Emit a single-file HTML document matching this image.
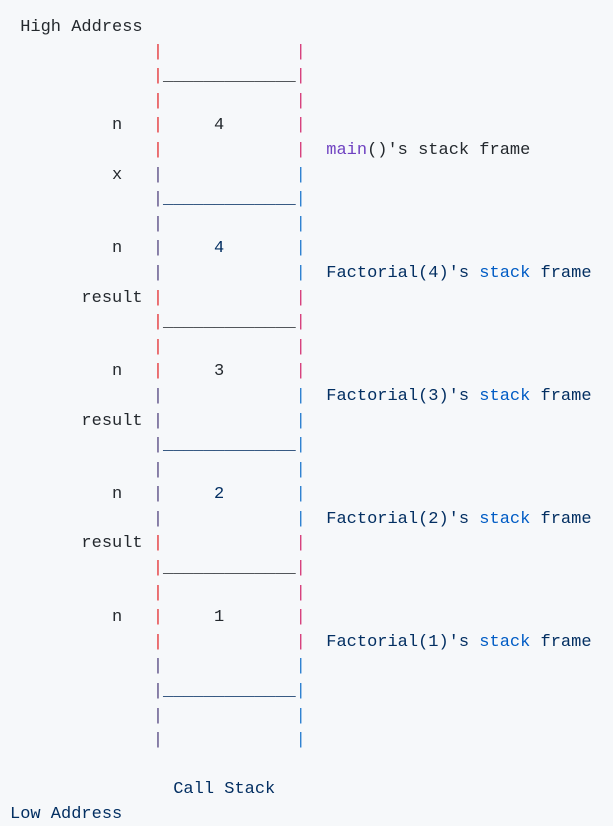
<!DOCTYPE html>
<html><head><meta charset="utf-8"><style>
html,body{margin:0;padding:0;background:#f6f8fa;width:613px;height:826px;overflow:hidden}
pre{margin:0;padding:16px 0 0 10px;font-family:"Liberation Mono",monospace;font-size:17px;line-height:24.6px;color:#24292e}
.r{color:#e5383b}.p{color:#d63c7a}.v{color:#5b4e86}.b{color:#2a7fd0}.n{color:#032f62}.m{color:#6f42c1}.s{color:#005cc5}
</style></head><body><pre> High Address
              <span class="r">|</span>             <span class="p">|</span>
              <span class="r">|</span>_____________<span class="p">|</span>
              <span class="r">|</span>             <span class="p">|</span>
          n   <span class="r">|</span>     4       <span class="p">|</span>
              <span class="r">|</span>             <span class="p">|</span>  <span class="m">main</span>()'s stack frame
          x   <span class="v">|</span>             <span class="b">|</span>
              <span class="v">|</span><span class="n">_____________</span><span class="b">|</span>
              <span class="v">|</span>             <span class="b">|</span>
          n   <span class="v">|</span>     <span class="n">4</span>       <span class="b">|</span>
              <span class="v">|</span>             <span class="b">|</span>  <span class="n">Factorial(4)'s <span class="s">stack</span> frame</span>
       result <span class="r">|</span>             <span class="p">|</span>
              <span class="r">|</span>_____________<span class="p">|</span>
              <span class="r">|</span>             <span class="p">|</span>
          n   <span class="r">|</span>     3       <span class="p">|</span>
              <span class="v">|</span>             <span class="b">|</span>  <span class="n">Factorial(3)'s <span class="s">stack</span> frame</span>
       result <span class="v">|</span>             <span class="b">|</span>
              <span class="v">|</span><span class="n">_____________</span><span class="b">|</span>
              <span class="v">|</span>             <span class="b">|</span>
          n   <span class="v">|</span>     <span class="n">2</span>       <span class="b">|</span>
              <span class="v">|</span>             <span class="b">|</span>  <span class="n">Factorial(2)'s <span class="s">stack</span> frame</span>
       result <span class="r">|</span>             <span class="p">|</span>
              <span class="r">|</span>_____________<span class="p">|</span>
              <span class="r">|</span>             <span class="p">|</span>
          n   <span class="r">|</span>     1       <span class="p">|</span>
              <span class="r">|</span>             <span class="p">|</span>  <span class="n">Factorial(1)'s <span class="s">stack</span> frame</span>
              <span class="v">|</span>             <span class="b">|</span>
              <span class="v">|</span><span class="n">_____________</span><span class="b">|</span>
              <span class="v">|</span>             <span class="b">|</span>
              <span class="v">|</span>             <span class="b">|</span>

                <span class="n">Call Stack</span>
<span class="n">Low Address</span></pre></body></html>
